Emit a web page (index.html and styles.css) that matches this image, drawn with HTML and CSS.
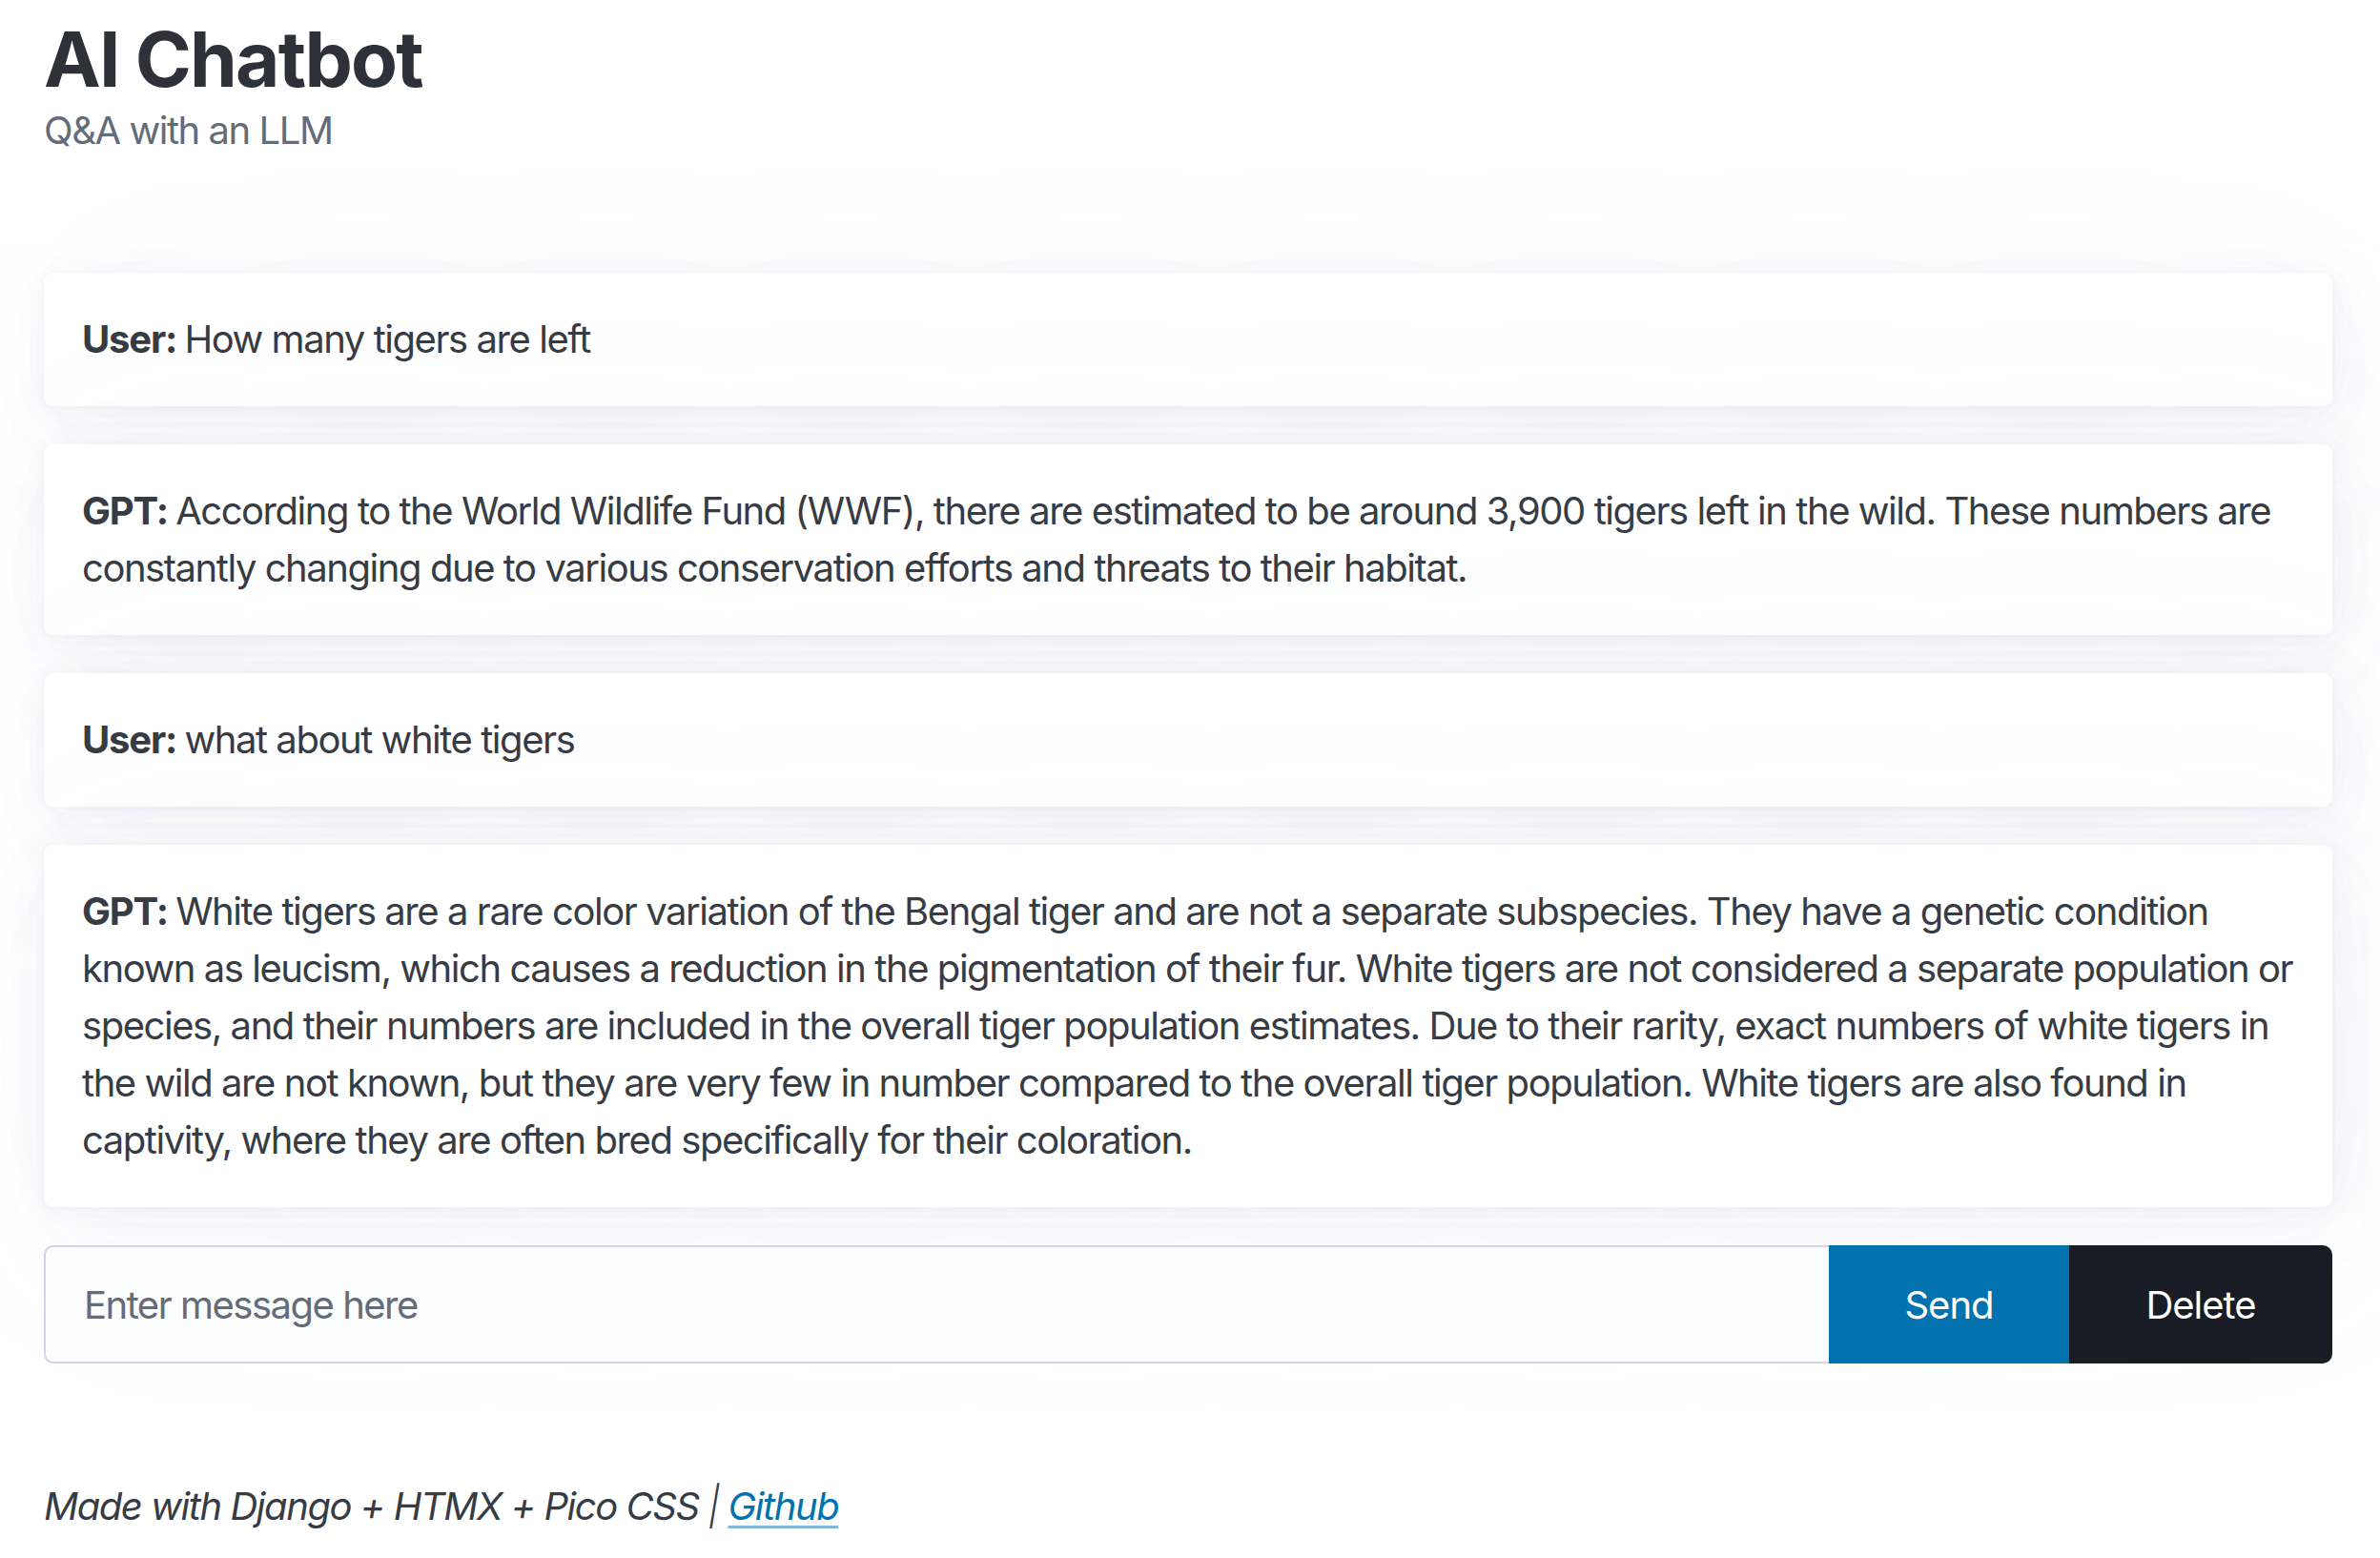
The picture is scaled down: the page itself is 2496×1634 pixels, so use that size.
FILE: index.html
```html
<!DOCTYPE html>
<html lang="en">
<head>
<meta charset="utf-8">
<title>AI Chatbot</title>
<link rel="stylesheet" href="styles.css">
</head>
<body>
<main class="container">
  <header class="hgroup">
    <h1 class="title">AI Chatbot</h1>
    <p class="subtitle">Q&amp;A with an LLM</p>
  </header>

  <section class="messages">
    <article class="card"><strong>User: </strong>How many tigers are left</article>
    <article class="card"><strong>GPT: </strong>According to the World Wildlife Fund (WWF), there are estimated to be around 3,900 tigers left in the wild. These numbers are constantly changing due to various conservation efforts and threats to their habitat.</article>
    <article class="card"><strong>User: </strong>what about white tigers</article>
    <article class="card"><strong>GPT: </strong>White tigers are a rare color variation of the Bengal tiger and are not a separate subspecies. They have a genetic condition known as leucism, which causes a reduction in the pigmentation of their fur. White tigers are not considered a separate population or species, and their numbers are included in the overall tiger population estimates. Due to their rarity, exact numbers of white tigers in the wild are not known, but they are very few in number compared to the overall tiger population. White tigers are also found in captivity, where they are often bred specifically for their coloration.</article>
  </section>

  <form class="group">
    <input class="msg-input" type="text" placeholder="Enter message here">
    <button type="button" class="btn btn-send">Send</button>
    <button type="button" class="btn btn-delete">Delete</button>
  </form>

  <footer class="footer">
    <em>Made with Django + HTMX + Pico CSS <span class="sep">|</span> <a href="#">Github</a></em>
  </footer>
</main>
</body>
</html>
```

FILE: styles.css
```css
html, body {
  margin: 0;
  padding: 0;
  background: #ffffff;
}

body {
  font-family: Inter, "Noto Sans", "Liberation Sans", sans-serif;
  font-size: 40px;
  line-height: 60px;
  letter-spacing: -1.45px;
  color: #373c44;
  -webkit-font-smoothing: antialiased;
}

.container {
  max-width: 2400px;
  margin: 0 auto 0 46px;
  padding-top: 17px;
  padding-bottom: 40px;
}

.hgroup {
  margin-bottom: 119px;
}

.title {
  margin: 0;
  font-size: 80px;
  line-height: 90px;
  font-weight: 700;
  color: #2d3138;
  letter-spacing: -1.8px;
}

.subtitle {
  margin: 0;
  font-size: 40px;
  line-height: 60px;
  color: #646b79;
}

.messages {
  display: flex;
  flex-direction: column;
  gap: 40px;
}

.card {
  background: #ffffff;
  border-radius: 10px;
  padding: 40px;
  box-shadow:
    0.58px 1.16px 6.96px rgba(129, 145, 181, 0.017),
    1.34px 2.68px 16px rgba(129, 145, 181, 0.024),
    2.5px 5px 30px rgba(129, 145, 181, 0.03),
    4.5px 9px 54px rgba(129, 145, 181, 0.036),
    8.34px 16.7px 100px rgba(129, 145, 181, 0.043),
    20px 40px 240px rgba(129, 145, 181, 0.06),
    0 0 0 2.5px rgba(129, 145, 181, 0.015);
}

.card strong {
  font-weight: 700;
  letter-spacing: -1.2px;
  color: #373c44;
}

.group {
  display: flex;
  margin: 40px 0 0 0;
  height: 124px;
}

.msg-input {
  flex: 1;
  min-width: 0;
  box-sizing: border-box;
  height: 124px;
  margin: 0;
  padding: 0 40px;
  border: 2px solid #cfd5e2;
  border-right: none;
  border-radius: 10px 0 0 10px;
  background: #fbfcfc;
  font-family: inherit;
  font-size: 40px;
  letter-spacing: -1.5px;
  color: #373c44;
  outline: none;
}

.msg-input::placeholder {
  color: #646b79;
  opacity: 1;
}

.btn {
  box-sizing: border-box;
  height: 124px;
  margin: 0;
  border: none;
  font-family: inherit;
  font-size: 40px;
  letter-spacing: -1px;
  color: #ffffff;
  text-align: center;
  padding: 0;
}

.btn-send {
  width: 252px;
  background: #0172ad;
}

.btn-delete {
  width: 276px;
  background: #181c25;
  border-radius: 0 10px 10px 0;
}

.footer {
  margin-top: 120px;
  font-size: 40px;
  line-height: 60px;
  color: #373c44;
}

.footer .sep {
  font-weight: 300;
}

.footer a {
  color: #0172ad;
  text-decoration: underline;
  text-decoration-color: rgba(1, 114, 173, 0.5);
  text-decoration-thickness: 3px;
  text-underline-offset: 6px;
}
```
